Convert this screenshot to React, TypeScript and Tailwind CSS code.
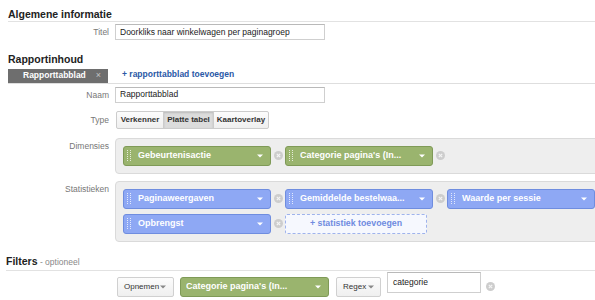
import React from 'react';

type Color = 'green' | 'blue';

const pillColors: Record<Color, string> = {
  green: 'bg-[#9ab46e] border-[#7f9a57]',
  blue: 'bg-[#8ea8f4] border-[#6f8ddf]',
};

function Handle() {
  return (
    <svg width="4" height="11" viewBox="0 0 4 11" className="shrink-0">
      {[0, 2, 4, 6, 8, 10].map((y) => (
        <g key={y}>
          <rect x="0" y={y} width="1" height="1" fill="rgba(255,255,255,0.75)" />
          <rect x="3" y={y} width="1" height="1" fill="rgba(255,255,255,0.75)" />
        </g>
      ))}
    </svg>
  );
}

function Caret({ className = 'fill-white' }: { className?: string }) {
  return (
    <svg width="6" height="4" viewBox="0 0 6 4" className={'shrink-0 ' + className}>
      <path d="M0 0.5h6L3 3.5z" />
    </svg>
  );
}

function RemoveDot() {
  return (
    <svg width="9" height="9" viewBox="0 0 9 9" className="shrink-0 ml-[3px] mr-[2px]">
      <circle cx="4.5" cy="4.5" r="4.5" fill="#cdcdcd" />
      <path d="M2.8 2.8l3.4 3.4M6.2 2.8l-3.4 3.4" stroke="#f4f4f4" strokeWidth="1.2" />
    </svg>
  );
}

function Pill({ label, color, width = 'w-[148px]' }: { label: string; color: Color; width?: string }) {
  return (
    <div
      className={`${width} h-[20px] shrink-0 rounded-[3px] border ${pillColors[color]} flex items-center pl-[3px] pr-[7px]`}
    >
      <Handle />
      <span className="ml-[7px] flex-1 truncate text-[9px] font-bold text-white">{label}</span>
      <Caret />
    </div>
  );
}

function Row({ label, children, top = false }: { label: string; children: React.ReactNode; top?: boolean }) {
  return (
    <div className={`flex gap-[6px] ${top ? 'items-start' : 'items-center'}`}>
      <div className={`w-[109px] shrink-0 text-right text-[8.5px] leading-[10px] text-[#777] ${top ? 'pt-[3px]' : ''}`}>
        {label}
      </div>
      {children}
    </div>
  );
}

function TextBox({ value, className = '' }: { value: string; className?: string }) {
  return (
    <div
      className={`h-[16px] border border-[#cfcfcf] border-t-[#b9b9b9] bg-white px-[4px] flex items-center text-[8.5px] text-[#222] ${className}`}
    >
      {value}
    </div>
  );
}

export default function App() {
  return (
    <div className="w-[595px] h-[300px] overflow-hidden bg-white font-['Liberation_Sans',Arial,sans-serif] text-[#333]">
      {/* Algemene informatie */}
      <div className="pt-[8px] pl-[8px]">
        <h2 className="text-[10.5px] leading-[12px] font-bold text-[#222] pb-[1px] border-b border-[#e2e2e2]">
          Algemene informatie
        </h2>
      </div>
      <div className="mt-[2px]">
        <Row label="Titel">
          <TextBox value="Doorkliks naar winkelwagen per paginagroep" className="w-[210px]" />
        </Row>
      </div>

      {/* Rapportinhoud */}
      <h2 className="mt-[13px] pl-[8px] text-[10.5px] leading-[12px] font-bold text-[#222]">Rapportinhoud</h2>
      <div className="mt-[3px] ml-[8px] flex items-end border-b border-[#dedede]">
        <div className="w-[100px] h-[14px] bg-[#6e6e6e] flex items-center pl-[15px] pr-[7px]">
          <span className="flex-1 text-[8.5px] font-bold text-white">Rapporttabblad</span>
          <span className="text-[9px] text-[#c4c4c4]">×</span>
        </div>
        <span className="ml-[14px] mb-[2px] text-[8.5px] font-bold text-[#2a58a6]">+ rapporttabblad toevoegen</span>
      </div>
      <div className="mt-[3px]">
        <Row label="Naam">
          <TextBox value="Rapporttabblad" className="w-[210px]" />
        </Row>
      </div>
      <div className="mt-[8px]">
        <Row label="Type">
          <div className="flex ml-[1px]">
            {[
              { label: 'Verkenner', w: 'w-[48px]', active: false },
              { label: 'Platte tabel', w: 'w-[51px]', active: true },
              { label: 'Kaartoverlay', w: 'w-[56px]', active: false },
            ].map((b) => (
              <div
                key={b.label}
                className={`${b.w} h-[18px] -mr-px border border-[#cccccc] flex items-center justify-center text-[8px] font-bold text-[#333] ${
                  b.active ? 'bg-[#dcdcdc] shadow-[inset_0_1px_2px_rgba(0,0,0,0.15)]' : 'bg-gradient-to-b from-[#fcfcfc] to-[#efefef]'
                } first:rounded-l-[2px] last:rounded-r-[2px]`}
              >
                {b.label}
              </div>
            ))}
          </div>
        </Row>
      </div>

      {/* Dimensies */}
      <div className="mt-[9px]">
        <Row label="Dimensies" top>
          <div className="w-[620px] shrink-0 rounded-[4px] border border-[#dadada] bg-[#eeeeee] pl-[7px] py-[7px] flex items-center">
            <Pill label="Gebeurtenisactie" color="green" />
            <RemoveDot />
            <Pill label="Categorie pagina's (In..." color="green" />
            <RemoveDot />
          </div>
        </Row>
      </div>

      {/* Statistieken */}
      <div className="mt-[7px]">
        <Row label="Statistieken" top>
          <div className="w-[620px] shrink-0 rounded-[4px] border border-[#dadada] bg-[#eeeeee] pl-[7px] py-[7px] flex flex-col gap-[5px]">
            <div className="flex items-center">
              <Pill label="Paginaweergaven" color="blue" />
              <RemoveDot />
              <Pill label="Gemiddelde bestelwaa..." color="blue" />
              <RemoveDot />
              <Pill label="Waarde per sessie" color="blue" />
            </div>
            <div className="flex items-center">
              <Pill label="Opbrengst" color="blue" />
              <RemoveDot />
              <div className="w-[142px] h-[20px] rounded-[2px] border border-dashed border-[#9fb3ec] bg-[#f6f8fe] flex items-center justify-center text-[8.8px] font-bold text-[#6f8be0]">
                + statistiek toevoegen
              </div>
            </div>
          </div>
        </Row>
      </div>

      {/* Filters */}
      <div className="mt-[12px] pl-[6px]">
        <h2 className="pb-[2px] border-b border-[#e2e2e2] leading-[12px]">
          <span className="text-[10.5px] font-bold text-[#222]">Filters</span>
          <span className="text-[8.5px] text-[#888]"> - optioneel</span>
        </h2>
      </div>
      <div className="mt-[1px] pl-[117px] flex items-start">
        <div className="mt-[5px] w-[57px] h-[20px] rounded-[2px] border border-[#d0d0d0] bg-gradient-to-b from-[#fcfcfc] to-[#efefef] flex items-center pl-[6px] pr-[7px]">
          <span className="flex-1 text-[8px] text-[#333]">Opnemen</span>
          <Caret className="fill-[#888]" />
        </div>
        <div className="ml-[6px] mt-[5px] w-[149px] h-[20px] rounded-[3px] border border-[#7f9a57] bg-[#9ab46e] flex items-center pl-[5px] pr-[7px]">
          <span className="flex-1 truncate text-[9px] font-bold text-white">Categorie pagina's (In...</span>
          <Caret />
        </div>
        <div className="ml-[7px] mt-[5px] w-[45px] h-[20px] rounded-[2px] border border-[#d0d0d0] bg-gradient-to-b from-[#fcfcfc] to-[#efefef] flex items-center pl-[6px] pr-[6px]">
          <span className="flex-1 text-[8px] text-[#333]">Regex</span>
          <Caret className="fill-[#888]" />
        </div>
        <TextBox value="categorie" className="ml-[6px] w-[94px] h-[21px] items-start pt-[3px] px-[5px]" />
        <div className="mt-[10px] ml-[2px]">
          <RemoveDot />
        </div>
      </div>
      <div className="mt-[5px] pl-[148px] text-[8.5px] leading-[10px] text-[#999]">+ filter toevoegen</div>
    </div>
  );
}
